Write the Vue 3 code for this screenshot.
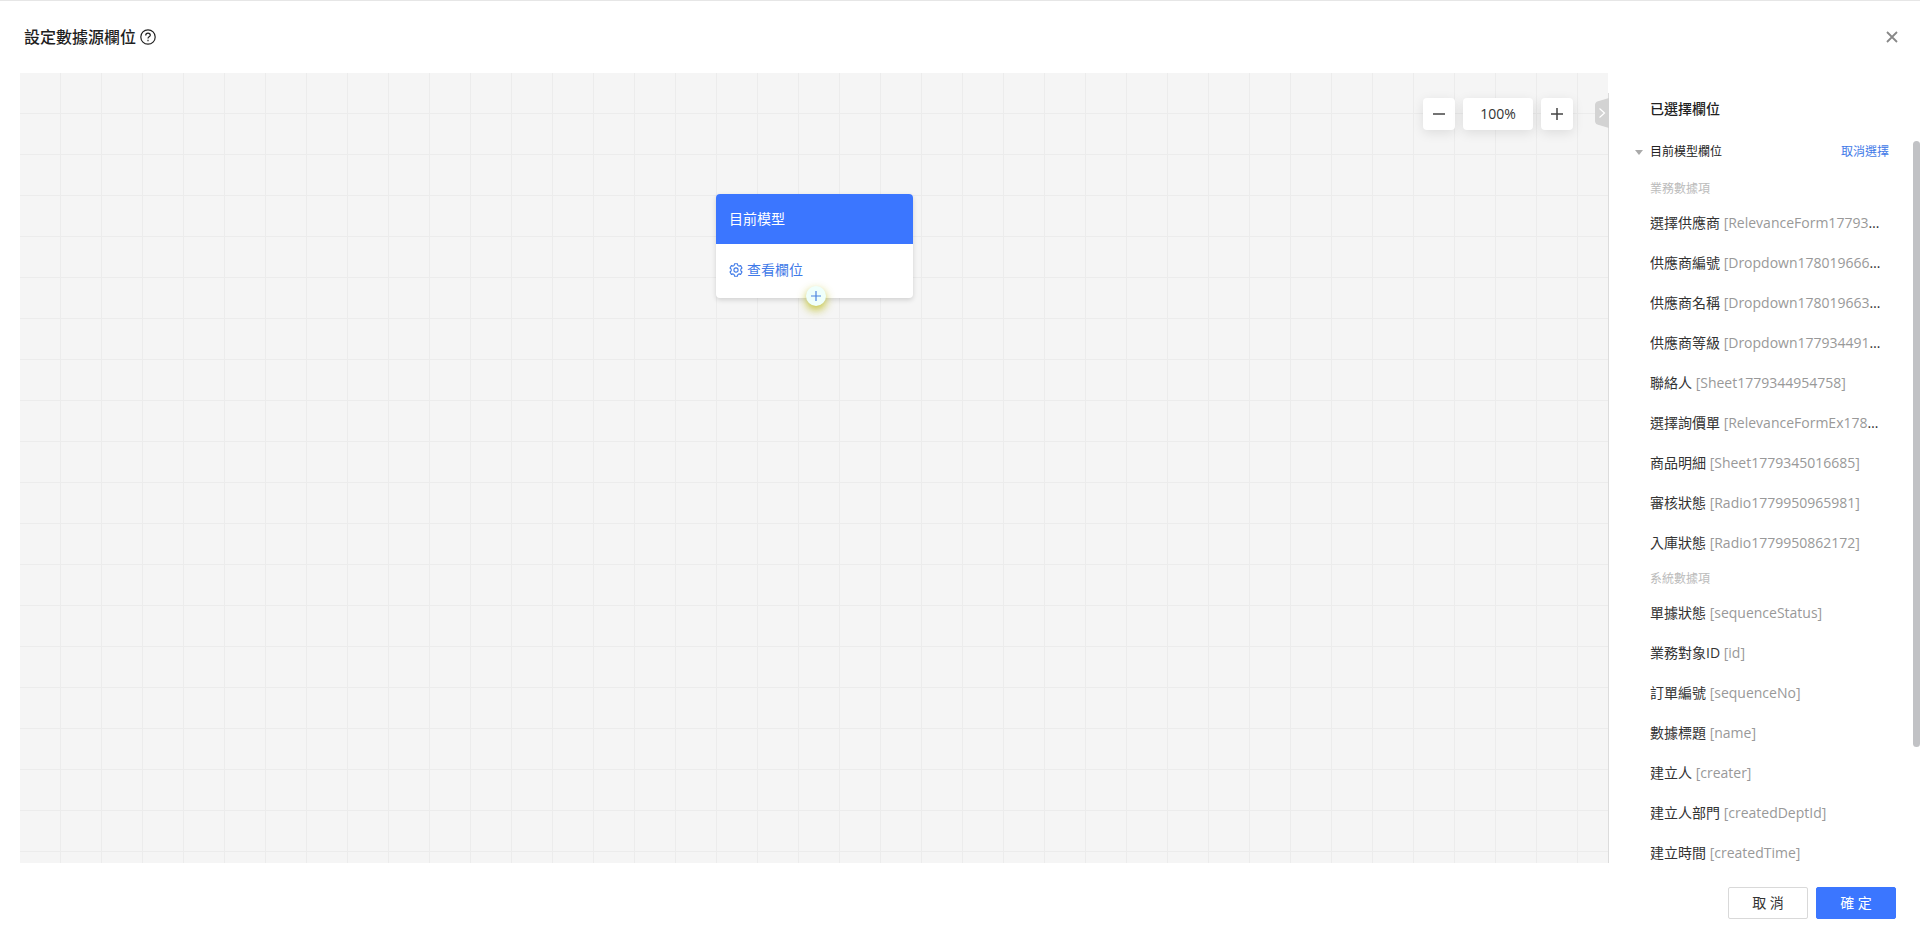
<script setup>
import { ref } from 'vue'

const zoom = ref(100)
const expanded = ref(true)
const panelOpen = ref(true)

const groups = [
  {
    label: '業務數據項',
    fields: [
      { name: '選擇供應商', code: 'RelevanceForm1779344901253' },
      { name: '供應商編號', code: 'Dropdown1780196660214' },
      { name: '供應商名稱', code: 'Dropdown1780196638127' },
      { name: '供應商等級', code: 'Dropdown1779344918306' },
      { name: '聯絡人', code: 'Sheet1779344954758' },
      { name: '選擇詢價單', code: 'RelevanceFormEx1780196601142' },
      { name: '商品明細', code: 'Sheet1779345016685' },
      { name: '審核狀態', code: 'Radio1779950965981' },
      { name: '入庫狀態', code: 'Radio1779950862172' },
    ],
  },
  {
    label: '系統數據項',
    fields: [
      { name: '單據狀態', code: 'sequenceStatus' },
      { name: '業務對象ID', code: 'id' },
      { name: '訂單編號', code: 'sequenceNo' },
      { name: '數據標題', code: 'name' },
      { name: '建立人', code: 'creater' },
      { name: '建立人部門', code: 'createdDeptId' },
      { name: '建立時間', code: 'createdTime' },
    ],
  },
]
</script>

<template>
  <div class="dialog">
    <header class="head">
      <h1>設定數據源欄位</h1>
      <button class="plain help" aria-label="說明">
        <svg width="16" height="16" viewBox="0 0 16 16" fill="none" stroke="#222" stroke-width="1.2">
          <circle cx="8" cy="8" r="7.2" />
          <path d="M5.7 6.5C5.7 5 6.7 4.1 8 4.1s2.3.9 2.3 2.1c0 1.600-2.300 1.700-2.300 3.200" />
          <path d="M8 10.800v1.400" />
        </svg>
      </button>
      <button class="plain close" aria-label="關閉">
        <svg width="12" height="12" viewBox="0 0 12 12" stroke="#888" stroke-width="1.800">
          <path d="M1 1l10 10M11 1L1 11" />
        </svg>
      </button>
    </header>

    <main class="body">
      <section class="canvas">
        <div class="zoom">
          <button class="tool" aria-label="縮小" @click="zoom -= 10">
            <svg width="12" height="12" viewBox="0 0 12 12" stroke="#444" stroke-width="1.500"><path d="M0 6h12" /></svg>
          </button>
          <output class="tool value">{{ zoom }}%</output>
          <button class="tool" aria-label="放大" @click="zoom += 10">
            <svg width="12" height="12" viewBox="0 0 12 12" stroke="#444" stroke-width="1.500"><path d="M0 6h12M6 0v12" /></svg>
          </button>
        </div>

        <button class="plain fold" aria-label="收合" @click="panelOpen = !panelOpen">
          <svg width="14" height="30" viewBox="0 0 14 30" fill="none">
            <path d="M14 0L3 3.200Q0 4.200 0 7v16Q0 25.800 3 26.800L14 30z" fill="#d3d3d3" />
            <path d="M4.500 10.500L9.500 15l-5 4.500" stroke="#fff" stroke-width="1.200" />
          </svg>
        </button>

        <article class="node">
          <h2>目前模型</h2>
          <div class="node-body">
            <button class="plain view">
              <svg width="14" height="14" viewBox="0 0 14 14" fill="none" stroke="currentColor" stroke-width="1.100" stroke-linejoin="round">
                <path d="M5.600.7h2.800l.4 1.700 1.100.7 1.700-.5 1.400 2.400-1.200 1.200v1.600l1.200 1.200-1.400 2.400-1.700-.5-1.100.7-.4 1.700H5.600l-.4-1.700-1.100-.7-1.700.5L1 9l1.200-1.200V6.200L1 5l1.400-2.400 1.700.5 1.100-.7z" />
                <circle cx="7" cy="7" r="2.100" />
              </svg>
              <span>查看欄位</span>
            </button>
          </div>
          <button class="plain add" aria-label="新增">
            <svg width="10" height="10" viewBox="0 0 10 10" stroke="#4c84e0" stroke-width="1.200"><path d="M0 5h10M5 0v10" /></svg>
          </button>
        </article>
      </section>

      <aside v-if="panelOpen" class="panel">
        <h2>已選擇欄位</h2>
        <div class="scroll">
          <div class="group-head">
            <button class="plain toggle" :aria-expanded="expanded" @click="expanded = !expanded">
              <svg width="8" height="5" viewBox="0 0 8 5"><path d="M0 0h8L4 5z" fill="#aaa" /></svg>
              <span>目前模型欄位</span>
            </button>
            <a href="#">取消選擇</a>
          </div>
          <template v-if="expanded">
            <template v-for="g in groups" :key="g.label">
              <h3>{{ g.label }}</h3>
              <ul>
                <li v-for="f in g.fields" :key="f.name">{{ f.name }} <span>[{{ f.code }}]</span></li>
              </ul>
            </template>
          </template>
          <i class="thumb"></i>
        </div>
      </aside>
    </main>

    <footer class="foot">
      <button class="btn">取 消</button>
      <button class="btn primary">確 定</button>
    </footer>
  </div>
</template>

<style>
body {
  margin: 0;
  background: #fff;
}
</style>

<style scoped>
.dialog {
  box-sizing: border-box;
  height: 100vh;
  display: flex;
  flex-direction: column;
  border-top: 1px solid #e6e6e6;
  background: #fff;
  color: #333;
  font-family: 'Open Sans', 'Noto Sans CJK TC', sans-serif;
  font-size: 14px;
  line-height: 20px;
}
h1,
h2,
h3,
ul {
  margin: 0;
  padding: 0;
  font-weight: 400;
}
button {
  font: inherit;
  cursor: pointer;
}
svg {
  display: block;
  flex: none;
}
.plain {
  padding: 0;
  border: 0;
  background: none;
  color: inherit;
}
.head {
  box-sizing: border-box;
  display: flex;
  align-items: center;
  height: 72px;
  padding: 0 22px 0 24px;
}
.head h1 {
  font-size: 16px;
  font-weight: 500;
  line-height: 24px;
  color: #1f1f1f;
}
.help {
  margin-left: 4px;
}
.close {
  margin-left: auto;
}
.body {
  flex: 1;
  min-height: 0;
  display: flex;
  padding-left: 20px;
}
.canvas {
  flex: 1;
  min-width: 0;
  position: relative;
  background-color: #f5f5f5;
  background-image: linear-gradient(to right, transparent 40px, #ececec 40px),
    linear-gradient(to bottom, transparent 40px, #ececec 40px);
  background-size: 41px 41px;
}
.zoom {
  display: flex;
  justify-content: flex-end;
  gap: 8px;
  padding: 25px 35px 0 0;
}
.tool {
  width: 32px;
  height: 32px;
  padding: 0;
  display: flex;
  align-items: center;
  justify-content: center;
  border: 0;
  border-radius: 4px;
  background: #fff;
  box-shadow: 0 3px 12px rgba(0, 0, 0, 0.1);
}
.value {
  width: 70px;
}
.fold {
  position: absolute;
  top: 25px;
  right: -1px;
}
.node {
  position: absolute;
  left: 696px;
  top: 121px;
  width: 197px;
  border-radius: 4px;
  background: #fff;
  box-shadow: 0 2px 5px rgba(0, 0, 0, 0.15);
}
.node h2 {
  padding: 15px 13px;
  border-radius: 4px 4px 0 0;
  background: #3b76ff;
  color: #fff;
  font-size: 14px;
}
.node-body {
  padding: 16px 13px 18px;
}
.view {
  display: flex;
  align-items: center;
  gap: 4px;
  color: #3f7ae8;
}
.add {
  position: absolute;
  left: 90px;
  bottom: -8px;
  width: 20px;
  height: 20px;
  display: flex;
  align-items: center;
  justify-content: center;
  border-radius: 50%;
  background: #effffb;
  box-shadow: 0 4px 10px rgba(180, 180, 0, 0.8);
}
.panel {
  width: 312px;
  box-sizing: border-box;
  display: flex;
  flex-direction: column;
  margin-top: 20px;
  border-left: 1px solid #dcdcdc;
}
.panel h2 {
  padding: 6px 0 22px 41px;
  font-size: 14px;
  font-weight: 500;
  color: #222;
}
.scroll {
  flex: 1;
  min-height: 0;
  overflow: hidden;
  position: relative;
  padding: 0 31px 0 26px;
}
.group-head {
  display: flex;
  justify-content: space-between;
  font-size: 12px;
  padding-top: 1px;
  padding-bottom: 11px;
}
.toggle {
  display: flex;
  align-items: center;
  gap: 7px;
  color: #222;
}
.group-head a {
  color: #3f7ae8;
  text-decoration: none;
}
h3 {
  padding: 2px 0 0 15px;
  font-size: 12px;
  line-height: 28px;
  color: #bbb;
}
ul {
  list-style: none;
  padding-left: 15px;
}
li {
  max-width: 235px;
  line-height: 40px;
  overflow: hidden;
  white-space: nowrap;
  text-overflow: ellipsis;
}
li span {
  color: #999;
}
.thumb {
  position: absolute;
  top: 0;
  right: 0;
  width: 7px;
  height: 84%;
  border-radius: 4px;
  background: #c1c2c5;
}
.foot {
  display: flex;
  justify-content: flex-end;
  gap: 8px;
  padding: 24px 24px 27px;
}
.btn {
  box-sizing: border-box;
  width: 80px;
  height: 32px;
  padding: 0;
  border: 1px solid #d9d9d9;
  border-radius: 2px;
  background: #fff;
  color: #333;
}
.btn.primary {
  border-color: #3b76ff;
  background: #3b76ff;
  color: #fff;
}
</style>
